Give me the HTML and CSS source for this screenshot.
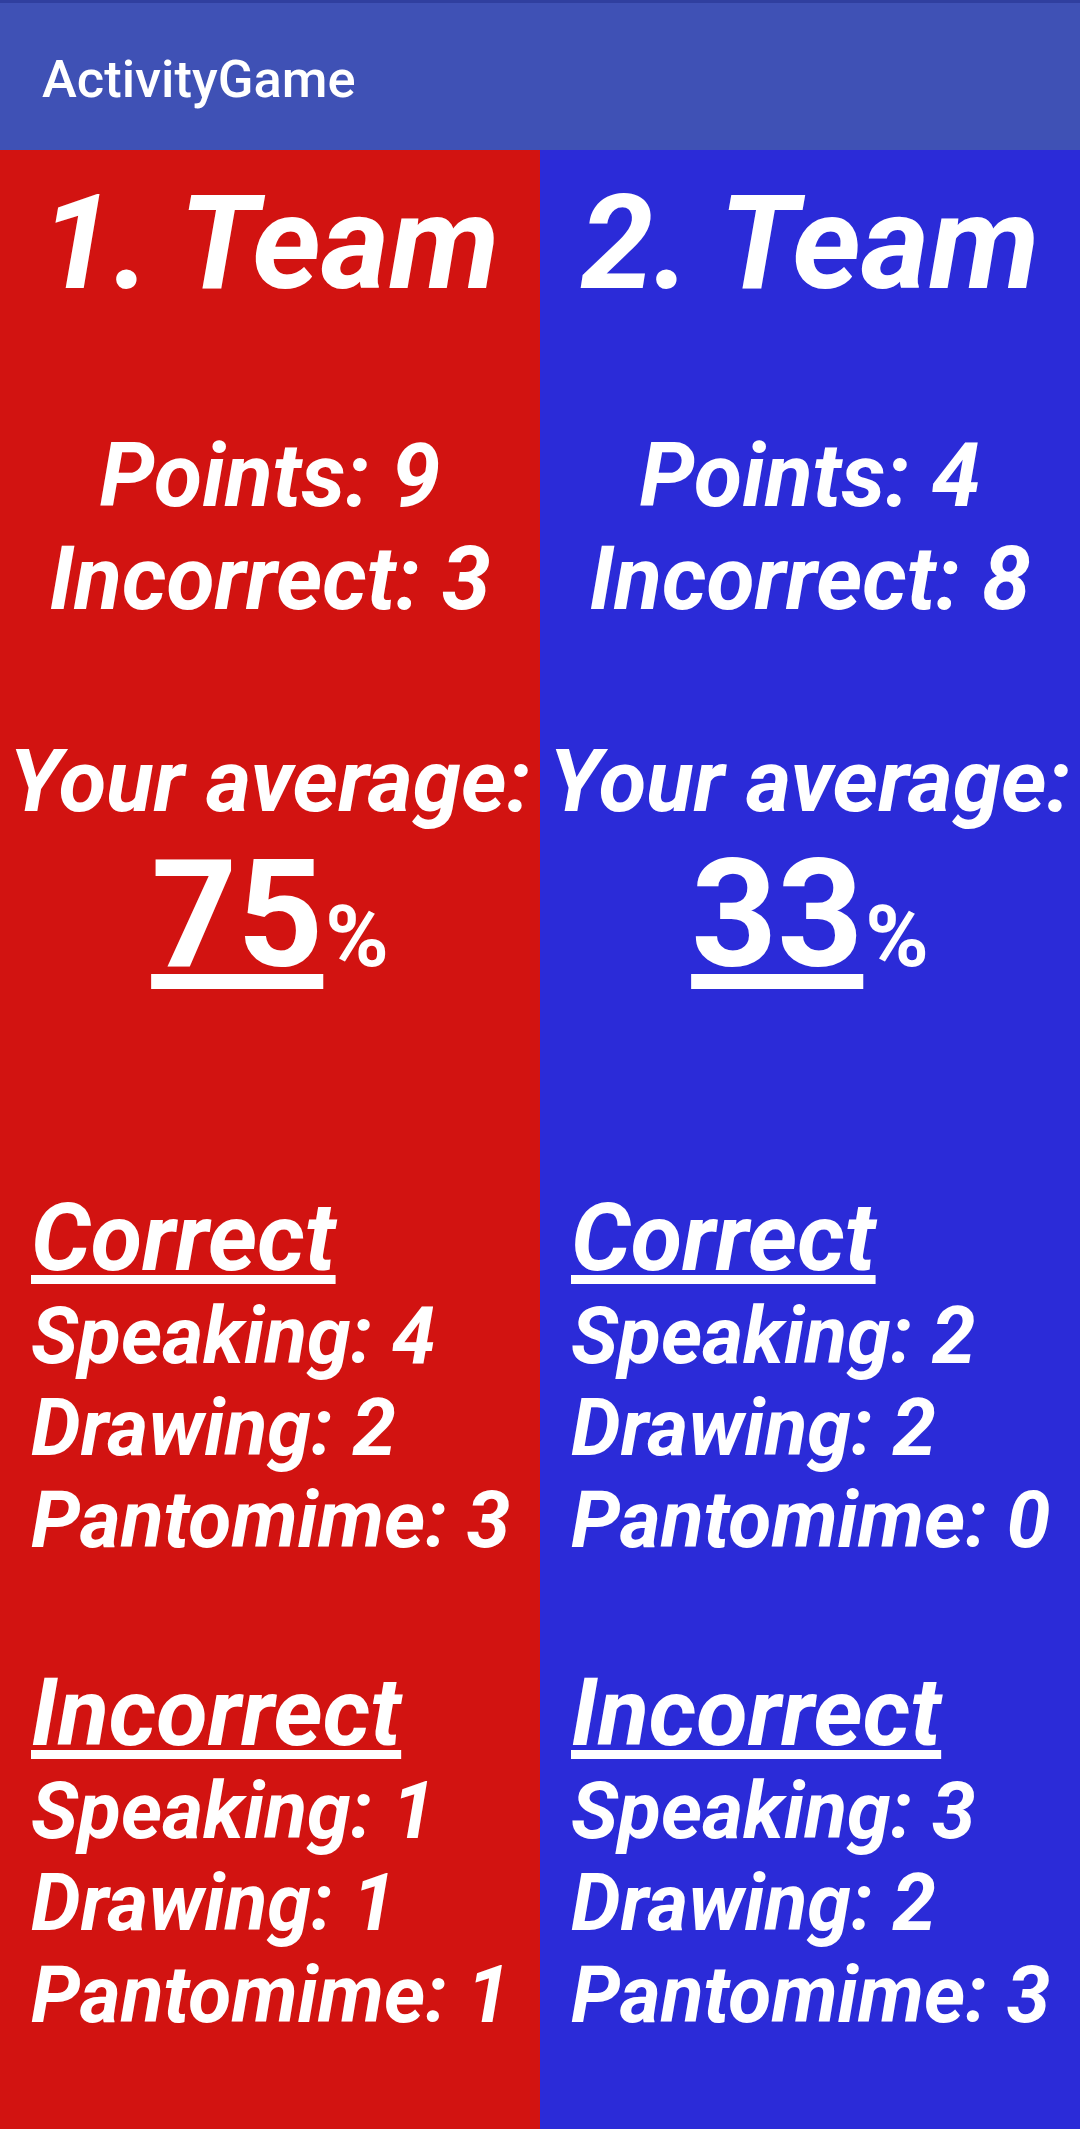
FILE: index.html
```html
<!DOCTYPE html>
<html lang="en">
<head>
    <meta charset="UTF-8">
    <meta name="viewport" content="width=device-width, initial-scale=1.0">
    <title>ActivityGame</title>
    <link rel="stylesheet" href="styles.css">
</head>
<body>
    <!-- App bar -->
    <header class="toolbar">
        <span class="toolbar-title">ActivityGame</span>
    </header>

    <!-- Results for both teams -->
    <main class="teams">
        <section class="team team-red">
            <h1 class="team-name">1. Team</h1>
            <div class="score">
                <p>Points: 9</p>
                <p>Incorrect: 3</p>
            </div>
            <p class="avg-label">Your average:</p>
            <p class="avg-value"><span class="avg-number">75</span><span class="avg-percent">%</span></p>
            <div class="breakdown breakdown-correct">
                <h2 class="breakdown-title">Correct</h2>
                <p>Speaking: 4</p>
                <p>Drawing: 2</p>
                <p>Pantomime: 3</p>
            </div>
            <div class="breakdown breakdown-incorrect">
                <h2 class="breakdown-title">Incorrect</h2>
                <p>Speaking: 1</p>
                <p>Drawing: 1</p>
                <p>Pantomime: 1</p>
            </div>
        </section>

        <section class="team team-blue">
            <h1 class="team-name">2. Team</h1>
            <div class="score">
                <p>Points: 4</p>
                <p>Incorrect: 8</p>
            </div>
            <p class="avg-label">Your average:</p>
            <p class="avg-value"><span class="avg-number">33</span><span class="avg-percent">%</span></p>
            <div class="breakdown breakdown-correct">
                <h2 class="breakdown-title">Correct</h2>
                <p>Speaking: 2</p>
                <p>Drawing: 2</p>
                <p>Pantomime: 0</p>
            </div>
            <div class="breakdown breakdown-incorrect">
                <h2 class="breakdown-title">Incorrect</h2>
                <p>Speaking: 3</p>
                <p>Drawing: 2</p>
                <p>Pantomime: 3</p>
            </div>
        </section>
    </main>
</body>
</html>
```

FILE: styles.css
```css
/* Base */
* {
    box-sizing: border-box;
}

body {
    margin: 0;
    height: 2129px;
    display: flex;
    flex-direction: column;
    font-family: Roboto, "Noto Sans", sans-serif;
    color: #fff;
    overflow: hidden;
}

p, h1, h2 {
    margin: 0;
    font-weight: 700;
}

/* App bar */
.toolbar {
    height: 150px;
    flex: 0 0 150px;
    border-top: 3px solid #303f9f;
    background-color: #3f51b5;
    padding: 45px 0 0 42px;
}

.toolbar-title {
    display: block;
    font-size: 52.5px;
    font-weight: 500;
    line-height: 62px;
}

/* Team columns */
.teams {
    flex: 1;
    display: flex;
}

.team {
    width: 540px;
    display: flex;
    flex-direction: column;
    font-style: italic;
}

.team-red {
    background-color: #d21311;
}

.team-blue {
    background-color: #2b2bd8;
}

.team-name {
    margin-top: 16px;
    font-size: 131.25px;
    line-height: 154px;
    text-align: center;
}

.score {
    margin-top: 104px;
    font-size: 88px;
    line-height: 103px;
    text-align: center;
}

.avg-label {
    margin-top: 100px;
    font-size: 87px;
    line-height: 103px;
    text-align: center;
    white-space: nowrap;
}

.avg-value {
    font-size: 150px;
    font-style: normal;
    line-height: 164px;
    text-align: center;
}

.avg-number {
    text-decoration: underline;
}

.avg-percent {
    font-size: 86px;
    line-height: 1;
    padding-left: 2px;
}

/* Correct / Incorrect breakdown */
.breakdown {
    padding-left: 31px;
    font-size: 78.75px;
    line-height: 92px;
}

.breakdown-correct {
    margin-top: 189px;
}

.breakdown-incorrect {
    margin-top: 95px;
}

.breakdown-title {
    font-size: 94px;
    line-height: 104px;
    text-decoration: underline;
}
```
